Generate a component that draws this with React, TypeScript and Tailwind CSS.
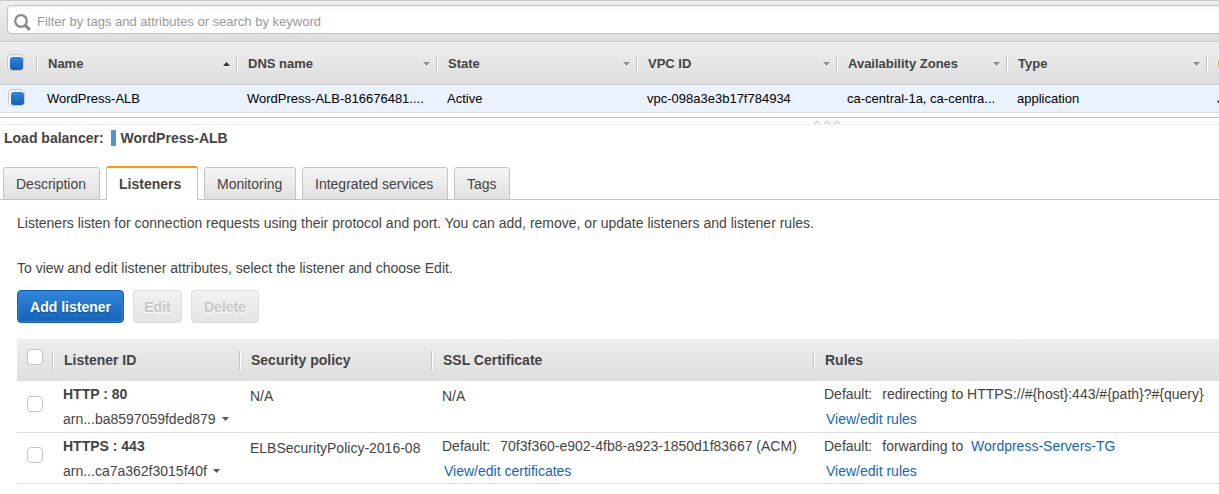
import type { ReactNode } from 'react';

const HEADER_BG = 'bg-linear-to-b from-[#ededed] to-[#dedede]';

function Check({ label, checked = false }: { label: string; checked?: boolean }) {
  return (
    <input
      type="checkbox"
      aria-label={label}
      defaultChecked={checked}
      className="block size-4 shrink-0 appearance-none rounded-[4px] border border-[#c4c4c4] bg-white checked:size-[17px] checked:border-[#c8c8c8] checked:bg-[#f3f3f3] checked:pt-0.5 checked:pl-0.5 checked:before:block checked:before:size-[13px] checked:before:rounded-[3px] checked:before:bg-linear-to-b checked:before:from-[#2f86d8] checked:before:to-[#1160b8] checked:before:content-['']"
    />
  );
}

function Caret({ up = false }: { up?: boolean }) {
  return (
    <svg aria-hidden="true" width="7" height="5" viewBox="0 0 7 5" className="shrink-0">
      {up ? (
        <>
          <path d="M0 4h7v1H0z" fill="#fff" />
          <path d="M0 4L3.5 0L7 4z" fill="#333" />
        </>
      ) : (
        <>
          <path d="M0 1L3.5 5L7 1z" fill="#fff" />
          <path d="M0 0h7L3.5 4z" fill="#8c8c8c" />
        </>
      )}
    </svg>
  );
}

function ColumnHead({ children, sort }: { children: ReactNode; sort?: 'up' | 'down' }) {
  return (
    <th scope="col" className="h-[42px] overflow-hidden p-0 text-left align-middle font-bold">
      <div className="flex h-[18px] items-center justify-between border-l border-[#c4c4c4] pt-0.5 pr-1.5 pl-[11px] whitespace-nowrap shadow-[inset_1px_0_0_#fff]">
        <span>{children}</span>
        {sort && <Caret up={sort === 'up'} />}
      </div>
    </th>
  );
}

function BalancerCell({ children }: { children: ReactNode }) {
  return <td className="p-0 pt-0.5 pl-[11px] whitespace-nowrap">{children}</td>;
}

function ListenerHead({ children }: { children: ReactNode }) {
  return (
    <th scope="col" className="h-[42px] p-0 text-left align-middle font-bold">
      <div className="flex h-[19px] items-center border-l border-[#c4c4c4] pl-[11px] whitespace-nowrap shadow-[inset_1px_0_0_#fff]">
        {children}
      </div>
    </th>
  );
}

function TextLink({ children }: { children: ReactNode }) {
  return (
    <a href="#" className="text-[#1166bb]">
      {children}
    </a>
  );
}

const tabs = [
  { name: 'Description', width: 'min-w-[97px]' },
  { name: 'Listeners', width: 'min-w-[92px]' },
  { name: 'Monitoring', width: 'min-w-[92px]' },
  { name: 'Integrated services', width: 'min-w-[146px]' },
  { name: 'Tags', width: 'min-w-[56px]' },
];

type Listener = {
  id: string;
  arn: string;
  policy: string;
  certificate?: string;
  rule: ReactNode;
};

const listeners: Listener[] = [
  {
    id: 'HTTP : 80',
    arn: 'arn...ba8597059fded879',
    policy: 'N/A',
    rule: 'redirecting to HTTPS://#{host}:443/#{path}?#{query}',
  },
  {
    id: 'HTTPS : 443',
    arn: 'arn...ca7a362f3015f40f',
    policy: 'ELBSecurityPolicy-2016-08',
    certificate: '70f3f360-e902-4fb8-a923-1850d1f83667 (ACM)',
    rule: (
      <>
        forwarding to&nbsp; <TextLink>Wordpress-Servers-TG</TextLink>
      </>
    ),
  },
];

export default function App() {
  return (
    <div className="overflow-hidden bg-white font-['Liberation_Sans',Arial,sans-serif] text-sm text-[#444]">
      <div className="border-y border-[#c8c8c8] bg-linear-to-b from-[#eeeeee] to-[#dedede] pt-1 pb-[7px] pl-[7px]">
        <label className="flex h-[29px] items-center gap-1.5 rounded-l-[4px] border border-r-0 border-[#c4c4c4] bg-white pt-1.5 pb-px pl-1.5 shadow-[inset_0_2px_3px_#f0f0f0]">
          <svg aria-hidden="true" width="17" height="17" viewBox="0 0 17 17" fill="none" stroke="#888" className="shrink-0">
            <circle cx="7" cy="7" r="5.8" strokeWidth="2.2" />
            <path d="M11.3 11.3L15.8 15.8" strokeWidth="3.2" />
          </svg>
          <input
            type="text"
            aria-label="Filter load balancers"
            placeholder="Filter by tags and attributes or search by keyword"
            className="min-w-0 flex-1 bg-transparent text-[13px] outline-none placeholder:text-[#999]"
          />
        </label>
      </div>

      <table className="w-full table-fixed border-collapse text-[13px]">
        <colgroup>
          <col className="w-9" />
          <col className="w-[200px]" />
          <col className="w-[200px]" />
          <col className="w-[200px]" />
          <col className="w-[200px]" />
          <col className="w-[170px]" />
          <col className="w-[200px]" />
          <col />
        </colgroup>
        <thead>
          <tr className={`border-t border-b border-t-white border-b-[#c8c8c8] ${HEADER_BG}`}>
            <th scope="col" className="p-0 pb-0.5 pl-[7px]">
              <Check label="Select all load balancers" checked />
            </th>
            <ColumnHead sort="up">Name</ColumnHead>
            <ColumnHead sort="down">DNS name</ColumnHead>
            <ColumnHead sort="down">State</ColumnHead>
            <ColumnHead sort="down">VPC ID</ColumnHead>
            <ColumnHead sort="down">Availability Zones</ColumnHead>
            <ColumnHead sort="down">Type</ColumnHead>
            <ColumnHead>C</ColumnHead>
          </tr>
        </thead>
        <tbody>
          <tr className="h-7 border-b border-[#ddd] bg-[#eaf2fe] text-black">
            <td className="p-0 pb-0.5 pl-2">
              <Check label="Select WordPress-ALB" checked />
            </td>
            <BalancerCell>WordPress-ALB</BalancerCell>
            <BalancerCell>WordPress-ALB-816676481....</BalancerCell>
            <BalancerCell>Active</BalancerCell>
            <BalancerCell>vpc-098a3e3b17f784934</BalancerCell>
            <BalancerCell>ca-central-1a, ca-centra...</BalancerCell>
            <BalancerCell>application</BalancerCell>
            <BalancerCell>J</BalancerCell>
          </tr>
        </tbody>
      </table>

      <div className="mt-1 flex h-2 items-end justify-center border-t border-b border-t-[#c4c4c4] border-b-[#eee] pl-[434px]">
        <svg aria-hidden="true" width="26" height="3" viewBox="0 0 26 3" fill="none" stroke="#bbb">
          <circle cx="3" cy="2.5" r="2" />
          <circle cx="13" cy="2.5" r="2" />
          <circle cx="23" cy="2.5" r="2" />
        </svg>
      </div>

      <h1 className="mt-[5px] flex h-4 items-center pl-1 font-bold">
        Load balancer:
        <span className="mr-[5px] ml-[7px] h-4 w-[5px] bg-[#5294cf]" />
        WordPress-ALB
      </h1>

      <div role="tablist" className="mt-5 flex items-end">
        <span className="w-[3px] self-stretch border-b border-[#c4c4c4]" />
        {tabs.map(({ name, width }) => {
          const active = name === 'Listeners';
          return (
            <div key={name} className="flex items-end">
              <button
                type="button"
                role="tab"
                aria-selected={active}
                className={`${width} ${
                  active
                    ? 'h-[34px] rounded-t-[3px] border-x border-t-2 border-x-[#c4c4c4] border-t-[#ff9900] bg-white px-3 text-left font-bold'
                    : 'h-[33px] rounded-t-[3px] border border-[#c4c4c4] bg-linear-to-b from-[#f5f5f5] to-[#e0e0e0] px-3 text-left'
                }`}
              >
                {name}
              </button>
              <span className="h-px w-1.5 bg-[#c4c4c4]" />
            </div>
          );
        })}
        <span className="h-px flex-1 bg-[#c4c4c4]" />
      </div>

      <main className="pl-[17px]">
        <p className="mt-[13px] leading-5">
          Listeners listen for connection requests using their protocol and port. You can add, remove, or update
          listeners and listener rules.
        </p>
        <p className="mt-[25px] leading-5">
          To view and edit listener attributes, select the listener and choose Edit.
        </p>

        <div className="mt-3 flex gap-[9px] font-bold">
          <button
            type="button"
            className="h-[33px] min-w-[107px] rounded-[4px] border border-[#1160b0] bg-linear-to-b from-[#2f86dc] to-[#1463b9] px-2.5 text-white shadow-[inset_0_0_0_1px_#3080cc] text-shadow-[0_1px_1px_#0d4d90]"
          >
            Add listener
          </button>
          {[
            { name: 'Edit', width: 'min-w-[49px]' },
            { name: 'Delete', width: 'min-w-[68px]' },
          ].map(({ name, width }) => (
            <button
              key={name}
              type="button"
              disabled
              className={`${width} h-[33px] rounded-[4px] border border-[#dcdcdc] bg-linear-to-b from-[#f2f2f2] to-[#e4e4e4] px-2.5 text-[#c8c8c8] text-shadow-[0_1px_0_#fff]`}
            >
              {name}
            </button>
          ))}
        </div>

        <table className="mt-4 w-full table-fixed border-collapse">
          <colgroup>
            <col className="w-[35px]" />
            <col className="w-[187px]" />
            <col className="w-[192px]" />
            <col className="w-[382px]" />
            <col />
          </colgroup>
          <thead>
            <tr className={HEADER_BG}>
              <th scope="col" className="p-0 pb-[7px] pl-2.5">
                <Check label="Select all listeners" />
              </th>
              <ListenerHead>Listener ID</ListenerHead>
              <ListenerHead>Security policy</ListenerHead>
              <ListenerHead>SSL Certificate</ListenerHead>
              <ListenerHead>Rules</ListenerHead>
            </tr>
          </thead>
          <tbody className="leading-[25px] whitespace-nowrap">
            {listeners.map((item) => (
              <tr key={item.id} className="h-[51px] border-b border-[#ddd] align-top">
                <td className="p-0 pb-[5px] pl-2.5 align-middle">
                  <Check label={`Select ${item.id}`} />
                </td>
                <td className="p-0 pt-px pl-[11px]">
                  <div className="font-bold">{item.id}</div>
                  <button type="button" className="flex h-6 items-center gap-1.5 leading-6">
                    {item.arn}
                    <svg aria-hidden="true" width="7" height="4" viewBox="0 0 7 4">
                      <path d="M0 0h7L3.5 4z" fill="#555" />
                    </svg>
                  </button>
                </td>
                <td className="p-0 pt-[3px] pl-[11px]">{item.policy}</td>
                {item.certificate ? (
                  <td className="p-0 pt-px pl-[11px]">
                    <div className="flex gap-2.5">
                      <span>Default:</span>
                      <span>{item.certificate}</span>
                    </div>
                    <div className="pl-0.5 leading-6">
                      <TextLink>View/edit certificates</TextLink>
                    </div>
                  </td>
                ) : (
                  <td className="p-0 pt-[3px] pl-[11px]">N/A</td>
                )}
                <td className="p-0 pt-px pl-[11px]">
                  <div className="flex gap-2.5">
                    <span>Default:</span>
                    <span>{item.rule}</span>
                  </div>
                  <div className="pl-0.5 leading-6">
                    <TextLink>View/edit rules</TextLink>
                  </div>
                </td>
              </tr>
            ))}
          </tbody>
        </table>
      </main>
    </div>
  );
}
